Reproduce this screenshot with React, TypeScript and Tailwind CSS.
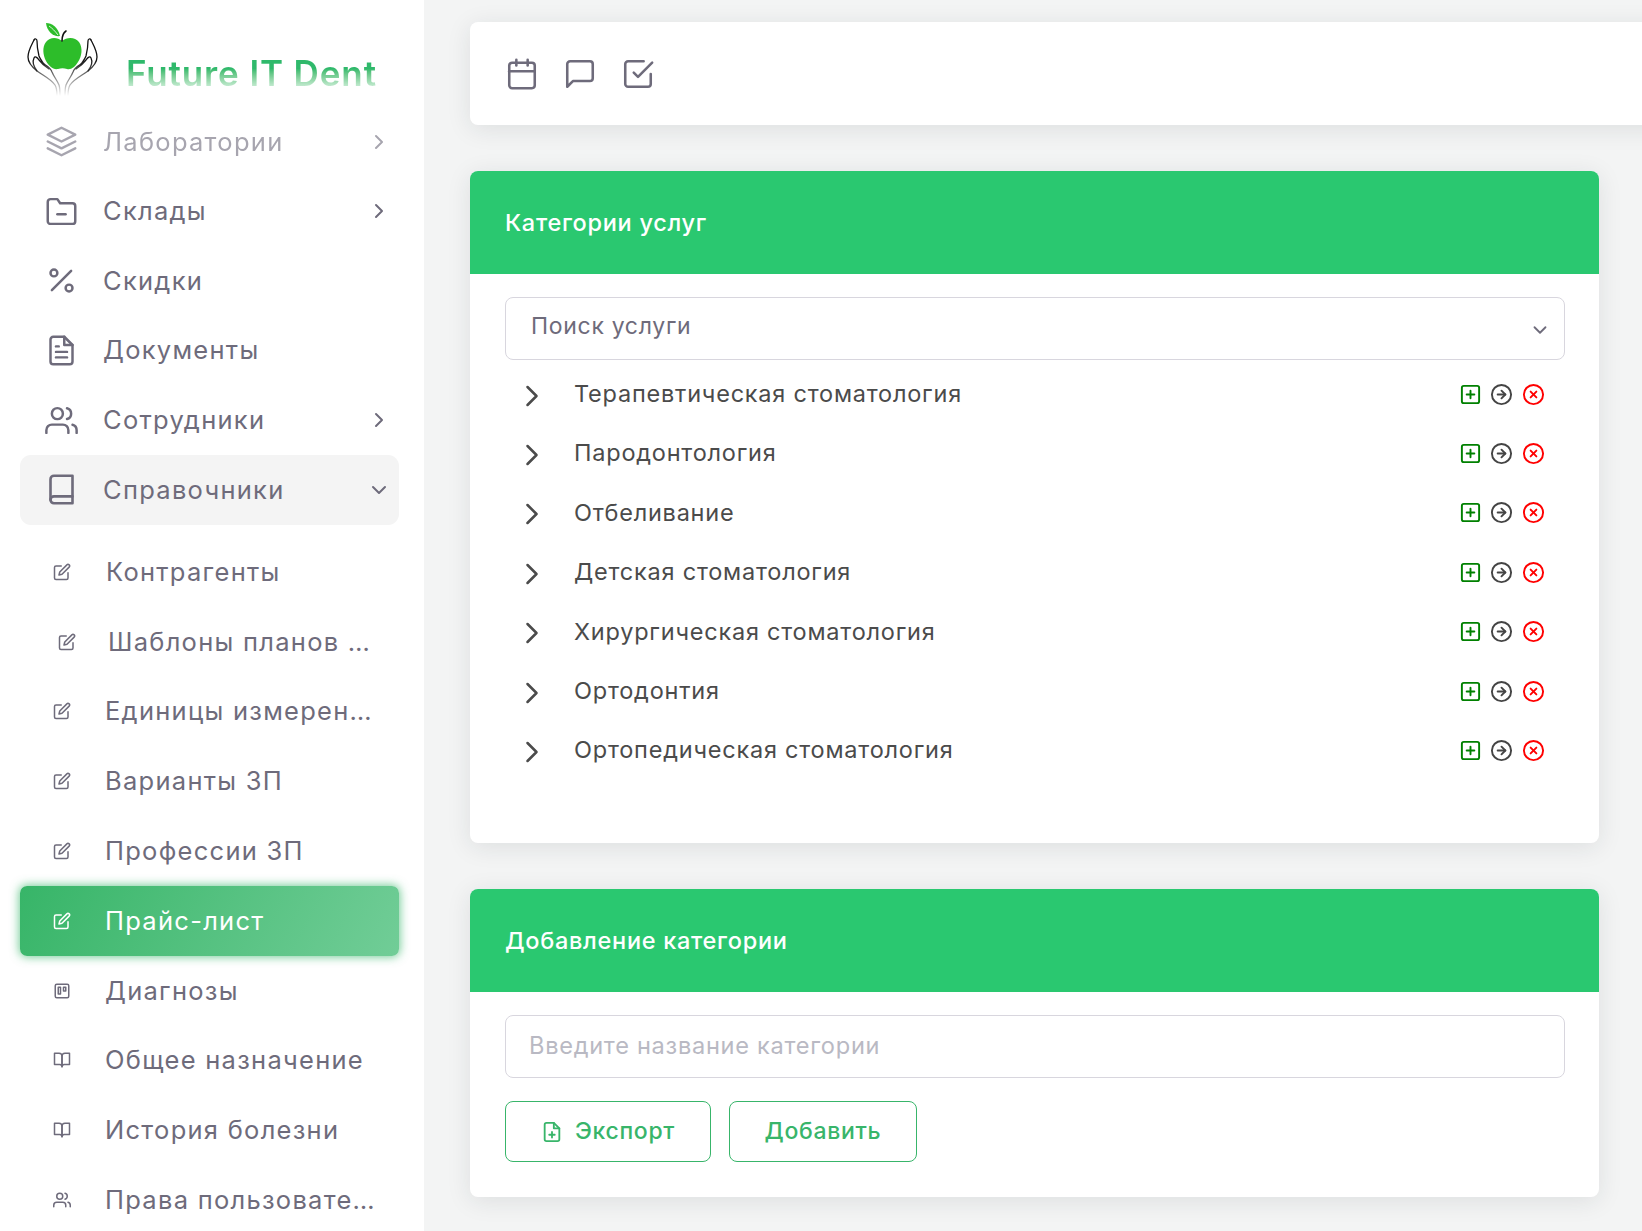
import React from "react";
import type { IconType } from "react-icons";
import {
  FiArrowRightCircle,
  FiBook,
  FiBookOpen,
  FiCalendar,
  FiCheckSquare,
  FiChevronDown,
  FiChevronRight,
  FiEdit,
  FiFilePlus,
  FiFileText,
  FiFolderMinus,
  FiLayers,
  FiMessageSquare,
  FiPercent,
  FiPlusSquare,
  FiTrello,
  FiUsers,
  FiXCircle,
} from "react-icons/fi";

const MAIN_MENU: { label: string; icon: IconType; chevron?: boolean; faded?: boolean }[] = [
  { label: "Лаборатории", icon: FiLayers, chevron: true, faded: true },
  { label: "Склады", icon: FiFolderMinus, chevron: true },
  { label: "Скидки", icon: FiPercent },
  { label: "Документы", icon: FiFileText },
  { label: "Сотрудники", icon: FiUsers, chevron: true },
];

const SUB_MENU: { label: string; icon: IconType; active?: boolean; indent?: string; gap?: string }[] = [
  { label: "Контрагенты", icon: FiEdit, gap: "ml-[35px]" },
  { label: "Шаблоны планов …", icon: FiEdit, indent: "pl-[38px]", gap: "ml-[32px]" },
  { label: "Единицы измерен…", icon: FiEdit },
  { label: "Варианты ЗП", icon: FiEdit },
  { label: "Профессии ЗП", icon: FiEdit },
  { label: "Прайс-лист", icon: FiEdit, active: true },
  { label: "Диагнозы", icon: FiTrello },
  { label: "Общее назначение", icon: FiBookOpen },
  { label: "История болезни", icon: FiBookOpen },
  { label: "Права пользовате…", icon: FiUsers },
];

const CATEGORIES = [
  "Терапевтическая стоматология",
  "Пародонтология",
  "Отбеливание",
  "Детская стоматология",
  "Хирургическая стоматология",
  "Ортодонтия",
  "Ортопедическая стоматология",
];

function Logo() {
  const hand = (
    <>
      <path d="M34 40c-3 6-6 11-6 17 0 6 4 10 9 14 7 5 14 8 18 14 2 3 2 7 2 11" />
      <path d="M34 40c1-2 3-1 3 1 0 6 1 11 2 15 1 3 3 5 5 8M37 71c-3-4-5-9-3-13 1-2 3-1 5 2 3 4 7 7 10 9" />
      <path d="M44 64c5 3 7 5 8 8 2 5 5 8 7 13 1 3 1 7 1 11" />
    </>
  );
  return (
    <svg width="84" height="80" viewBox="20 20 84 80" className="shrink-0">
      <defs>
        <linearGradient id="handFade" gradientUnits="userSpaceOnUse" x1="0" y1="60" x2="0" y2="96">
          <stop offset="0" stopColor="#111111" />
          <stop offset="1" stopColor="#111111" stopOpacity="0" />
        </linearGradient>
      </defs>
      <g fill="none" stroke="url(#handFade)" strokeWidth="1.3" strokeLinecap="round">
        {hand}
        <g transform="translate(125 0) scale(-1 1)">{hand}</g>
      </g>
      <path
        d="M62 41c5-4 13-4 17 1 4 6 3 14-1 20-3 5-7 8-11 7-3-1-6-1-9 0-5 1-9-3-12-8-3-6-4-14 0-19 4-5 11-5 16-1z"
        fill="#2dbd2a"
      />
      <path d="M62 41c0-4 1-8 4-10" fill="none" stroke="#111111" strokeWidth="1.6" strokeLinecap="round" />
      <path d="M46 23c6 0 12 4 14 13-6 1-13-4-14-13z" fill="#2dbd2a" />
      <path d="M49 26c3 2 6 5 9 9" fill="none" stroke="#ffffff" strokeWidth="0.8" />
    </svg>
  );
}

function Sidebar() {
  return (
    <aside className="w-[424px] h-full shrink-0 bg-white flex flex-col text-[#6e6b7b] overflow-hidden">
      <div className="h-[107px] flex shrink-0 pl-[20px] pt-[20px] relative">
        <Logo />
        <span className="ml-[22px] mt-[31px] h-[44px] text-[35px] leading-[44px] font-semibold tracking-[0.025em] whitespace-nowrap bg-gradient-to-b from-[#2fb96b] from-40% to-[#dff5e8] to-90% bg-clip-text text-transparent">
          Future IT Dent
        </span>
      </div>

      <nav className="flex flex-col px-[20px]">
        {MAIN_MENU.map((item) => (
          <div
            key={item.label}
            className={`h-[69.6px] flex items-center pl-[25px] pr-[13px] ${item.faded ? "opacity-60" : ""}`}
          >
            <item.icon size={33} strokeWidth={1.8} className="shrink-0" />
            <span className="ml-[25px] text-[25.5px] tracking-[0.05em] flex-1 whitespace-nowrap">{item.label}</span>
            {item.chevron && <FiChevronRight size={24} strokeWidth={2} />}
          </div>
        ))}

        <div className="h-[70px] w-[379px] flex items-center pl-[25px] pr-[8px] bg-[#f4f4f4] rounded-[11px]">
          <FiBook size={33} strokeWidth={1.9} className="shrink-0" />
          <span className="ml-[25px] text-[25.5px] tracking-[0.05em] flex-1">Справочники</span>
          <FiChevronDown size={24} strokeWidth={2} />
        </div>

        <div className="flex flex-col mt-[12px]">
          {SUB_MENU.map((item) =>
            item.active ? (
              <div
                key={item.label}
                className="h-[70px] w-[379px] my-[-0.1px] flex items-center pl-[33px] text-white rounded-[7px] bg-[linear-gradient(118deg,#37b568,#71cd97)] shadow-[0_0_10px_1px_rgba(56,181,106,0.7)]"
              >
                <item.icon size={18} strokeWidth={2} className="shrink-0" />
                <span className="ml-[34px] text-[25.5px] tracking-[0.05em] whitespace-nowrap">{item.label}</span>
              </div>
            ) : (
              <div key={item.label} className={`h-[69.8px] flex items-center ${item.indent ?? "pl-[33px]"}`}>
                <item.icon size={18} strokeWidth={2} className="shrink-0" />
                <span className={`${item.gap ?? "ml-[34px]"} text-[25.5px] tracking-[0.05em] whitespace-nowrap`}>
                  {item.label}
                </span>
              </div>
            ),
          )}
        </div>
      </nav>
    </aside>
  );
}

function CategoryRow({ label }: { label: string }) {
  return (
    <div className="h-[59.4px] flex items-center text-[#4b4b4b]">
      <FiChevronRight size={36} strokeWidth={1.7} className="ml-[9px] shrink-0 mt-[4px]" />
      <span className="ml-[24px] text-[23.5px] tracking-[0.033em] flex-1">{label}</span>
      <div className="flex items-center gap-[8px] mr-[20px] mt-[1px]">
        <FiPlusSquare size={23} strokeWidth={2} className="text-[#008000]" />
        <FiArrowRightCircle size={23} strokeWidth={2} className="text-[#444444]" />
        <FiXCircle size={23} strokeWidth={2} className="text-[#ff0000] ml-[1px]" />
      </div>
    </div>
  );
}

function Card({ title, children, className }: { title: string; children: React.ReactNode; className: string }) {
  return (
    <section
      className={`bg-white rounded-[8px] overflow-hidden shadow-[0_4px_24px_0_rgba(34,41,47,0.1)] flex flex-col ${className}`}
    >
      <div className="h-[103px] shrink-0 bg-[#2ac870] flex items-center pl-[35px] text-white text-[23.5px] tracking-[0.03em] font-medium">
        {title}
      </div>
      {children}
    </section>
  );
}

export default function App() {
  return (
    <div className="w-[1642px] h-[1231px] overflow-hidden flex bg-[#f3f4f4] font-['Inter',sans-serif]">
      <Sidebar />

      <main className="flex-1 min-w-0 flex flex-col pl-[46px] pr-[43px] pt-[22px]">
        <header className="h-[103px] shrink-0 -mr-[80px] bg-white rounded-[8px] shadow-[0_4px_24px_0_rgba(34,41,47,0.1)] flex items-center pl-[35px] gap-[24px] text-[#6e6b7b]">
          <FiCalendar size={34} strokeWidth={1.8} />
          <FiMessageSquare size={34} strokeWidth={1.8} />
          <FiCheckSquare size={34} strokeWidth={1.8} />
        </header>

        <Card title="Категории услуг" className="mt-[46px] h-[672px] shrink-0">
          <div className="pl-[35px] pr-[34px] pt-[23px] pb-[4px] text-[#6e6b7b] ">
            <div className="h-[63px] border border-[#d8d6de] rounded-[8px] flex items-center pl-[25px] pr-[13px]">
              <span className="flex-1 text-[23px] tracking-[0.03em] -mt-[4px]">Поиск услуги</span>
              <FiChevronDown size={22} strokeWidth={2} className="mt-[2px]" />
            </div>
            <div className="flex flex-col mt-[4px]">
              {CATEGORIES.map((name) => (
                <CategoryRow key={name} label={name} />
              ))}
            </div>
          </div>
        </Card>

        <Card title="Добавление категории" className="mt-[46px] h-[308px] shrink-0">
          <div className="pl-[35px] pr-[34px] pt-[23px]">
            <input
              placeholder="Введите название категории"
              className="w-full h-[63px] border border-[#d8d6de] rounded-[8px] pl-[23px] pb-[2px] text-[23.6px] tracking-[0.03em] outline-none placeholder:text-[#b9b9c3]"
            />
            <div className="flex gap-[18px] mt-[23px]">
              <button className="w-[206px] h-[61px] border border-[#38b56a] rounded-[8px] flex items-center justify-center text-[#38b56a] text-[23px] font-medium tracking-[0.03em]">
                <FiFilePlus size={22} strokeWidth={2} className="mr-[12px]" />
                Экспорт
              </button>
              <button className="w-[188px] h-[61px] border border-[#38b56a] rounded-[8px] flex items-center justify-center text-[#38b56a] text-[23px] font-medium tracking-[0.03em]">
                Добавить
              </button>
            </div>
          </div>
        </Card>
      </main>
    </div>
  );
}
